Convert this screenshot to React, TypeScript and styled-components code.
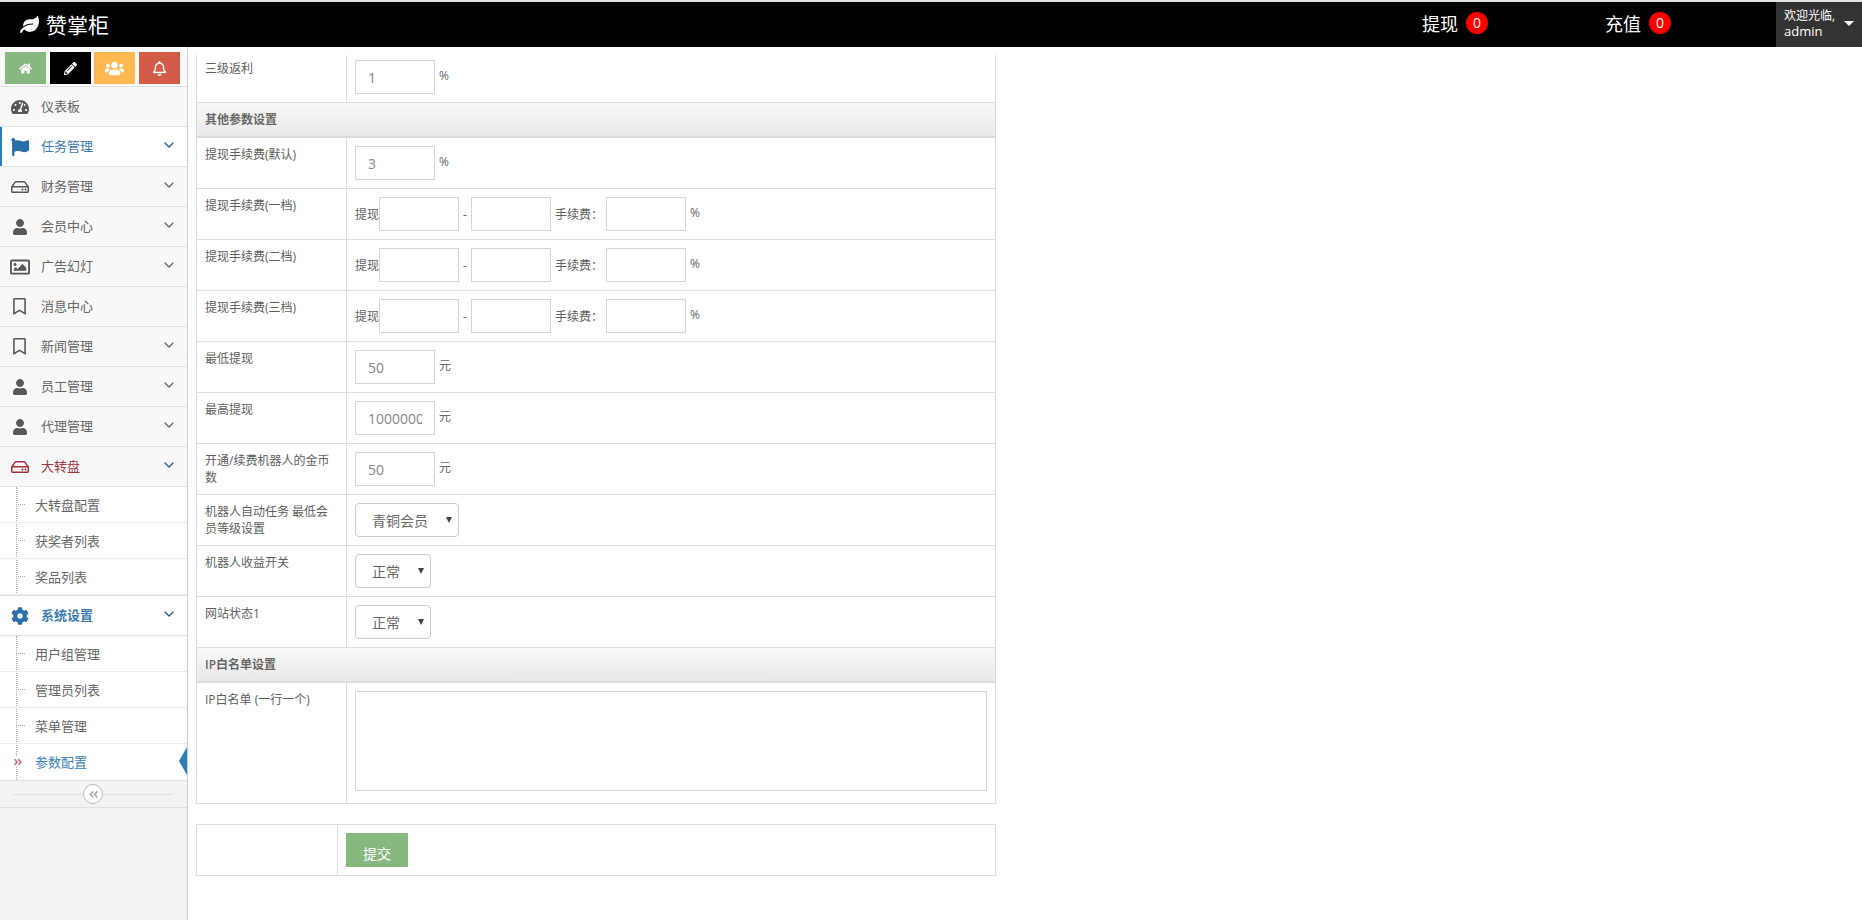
import React from "react";
import styled, { createGlobalStyle } from "styled-components";
import {
	FaAngleDoubleLeft,
	FaAngleDoubleRight,
	FaCog,
	FaFlag,
	FaHome,
	FaLeaf,
	FaPencilAlt,
	FaRegBell,
	FaRegBookmark,
	FaRegHdd,
	FaRegImage,
	FaTachometerAlt,
	FaUser,
	FaUsers,
} from "react-icons/fa";
import { FiChevronDown } from "react-icons/fi";

const GlobalStyle = createGlobalStyle`
	html, body {
		margin: 0;
		padding: 0;
		background: #fff;
	}
	body {
		font-family: "Open Sans", "Noto Sans CJK SC", sans-serif;
		font-size: 12px;
		color: #5e5e5e;
	}
	* {
		box-sizing: border-box;
	}
`;

const Page = styled.div`
	display: flex;
	flex-direction: column;
	min-height: 920px;
`;

/* top bar */
const Navbar = styled.header`
	display: flex;
	align-items: stretch;
	height: 47px;
	background: #000;
	border-top: 2px solid #e2e2e2;
	color: #fff;
`;
const Brand = styled.div`
	display: flex;
	align-items: center;
	gap: 7px;
	padding-left: 20px;
	font-size: 21px;
	line-height: 24px;
	flex: 1;
	svg {
		font-size: 19px;
	}
`;
const NavStat = styled.div<{ $width: number }>`
	display: flex;
	align-items: center;
	gap: 8px;
	width: ${(p) => p.$width}px;
	padding-bottom: 3px;
	font-size: 18px;
`;
const Badge = styled.span`
	display: flex;
	align-items: center;
	justify-content: center;
	width: 22px;
	height: 22px;
	border-radius: 50%;
	background: #f00;
	font-size: 14px;
	line-height: 22px;
`;
const UserBox = styled.div`
	display: flex;
	align-items: center;
	width: 86px;
	padding: 0 0 2px 8px;
	background: #333;
`;
const UserText = styled.div`
	font-size: 12px;
	line-height: 15px;
	span {
		display: block;
		font-size: 13px;
		line-height: 17px;
	}
`;
const Caret = styled.i`
	margin-left: 9px;
	border-left: 5px solid transparent;
	border-right: 5px solid transparent;
	border-top: 5px solid #fff;
`;

const Body = styled.div`
	display: flex;
	flex: 1;
`;

/* sidebar */
const Sidebar = styled.aside`
	width: 188px;
	background: #f2f2f2;
	border-right: 1px solid #ccc;
	flex-shrink: 0;
`;
const Shortcuts = styled.div`
	display: flex;
	gap: 3.5px;
	height: 40px;
	padding: 5px 0 0 5px;
	background: #fafafa;
	border-bottom: 1px solid #e0e0e0;
`;
const ShortcutBtn = styled.div<{ $bg: string }>`
	display: flex;
	align-items: center;
	justify-content: center;
	width: 41px;
	height: 32px;
	background: ${(p) => p.$bg};
	color: #fff;
	font-size: 13px;
`;
const MenuRow = styled.div<{ $tone?: "open" | "red" | "current" }>`
	display: flex;
	align-items: center;
	height: 40px;
	border-bottom: 1px solid #e2e2e2;
	font-size: 13px;
	background: ${(p) => (p.$tone === "open" || p.$tone === "current" ? "#fff" : "#f8f8f8")};
	color: ${(p) => (p.$tone === "red" ? "#a23339" : p.$tone ? "#3b7bb0" : "#666")};
	box-shadow: ${(p) => (p.$tone === "open" ? "inset 2px 0 0 #2b7dbc" : "none")};
`;
const MenuIcon = styled.span<{ $tone?: string }>`
	display: flex;
	align-items: center;
	justify-content: center;
	width: 41px;
	padding-right: 2px;
	font-size: 18px;
	color: ${(p) => (p.$tone === "red" ? "#a23339" : p.$tone ? "#2b6ea8" : "#585858")};
`;
const MenuText = styled.span<{ $bold?: boolean }>`
	flex: 1;
	padding-bottom: 2px;
	font-weight: ${(p) => (p.$bold ? 600 : 400)};
`;
const Chevron = styled(FiChevronDown)<{ $tone?: string }>`
	margin: 0 10px 3px 0;
	font-size: 16px;
	color: ${(p) => (p.$tone ? "#2e5b8c" : "#666")};
`;
const SubMenu = styled.div<{ $closed?: boolean }>`
	position: relative;
	background: #fff;
	border-bottom: ${(p) => (p.$closed ? "1px solid #e2e2e2" : "none")};
	&::before {
		content: "";
		position: absolute;
		left: 16px;
		top: 0;
		bottom: 0;
		border-left: 1px dotted #a8a8b4;
	}
`;
const SubItem = styled.div<{ $active?: boolean }>`
	position: relative;
	display: flex;
	align-items: center;
	height: 36px;
	padding: 0 0 1px 35px;
	border-bottom: 1px dotted #dcdcdc;
	font-size: 13px;
	color: ${(p) => (p.$active ? "#3b82b8" : "#666")};
	&:last-child {
		border-bottom: ${(p) => (p.$active ? "none" : "1px dotted #dcdcdc")};
	}
	&::before {
		content: "";
		display: ${(p) => (p.$active ? "none" : "block")};
		position: absolute;
		left: 18px;
		top: 17px;
		width: 7px;
		border-top: 1px dotted #a8a8b4;
	}
`;
const ActiveMark = styled(FaAngleDoubleRight)`
	position: absolute;
	left: 13px;
	top: 13px;
	font-size: 10px;
	color: #c9687a;
	background: #fff;
`;
const ActiveArrow = styled.i`
	position: absolute;
	right: 0;
	top: 3px;
	border-top: 14px solid transparent;
	border-bottom: 14px solid transparent;
	border-right: 8px solid #2b7dbc;
`;
const CollapseBar = styled.div`
	position: relative;
	display: flex;
	align-items: center;
	justify-content: center;
	height: 28px;
	background: #f3f3f3;
	border-top: 1px solid #e0e0e0;
	border-bottom: 1px solid #e0e0e0;
	&::before {
		content: "";
		position: absolute;
		left: 13px;
		right: 14px;
		top: 13px;
		border-top: 1px solid #e0e0e0;
	}
`;
const CollapseBtn = styled.span`
	position: relative;
	display: flex;
	align-items: center;
	justify-content: center;
	width: 20px;
	height: 20px;
	margin-left: -1px;
	border: 1px solid #bbb;
	border-radius: 50%;
	background: #fff;
	color: #aaa;
	font-size: 11px;
`;

/* form */
const Main = styled.main`
	flex: 1;
	padding: 8px 0 0 8px;
`;
const Table = styled.div`
	width: 800px;
	border-left: 1px solid #ddd;
	border-right: 1px solid #ddd;
	border-bottom: 1px solid #ddd;
`;
const Row = styled.div`
	display: flex;
	border-bottom: 1px solid #ddd;
	&:last-child {
		border-bottom: none;
	}
`;
const SectionRow = styled.div`
	display: flex;
	align-items: center;
	height: 35px;
	padding: 0 0 1px 8px;
	border-bottom: 2px solid #ddd;
	background: linear-gradient(#f8f8f8, #e9e9e9);
	font-weight: 600;
	color: #666;
`;
const Label = styled.div`
	width: 150px;
	flex-shrink: 0;
	padding: 8px 8px 0;
	border-right: 1px solid #ddd;
	line-height: 17px;
`;
const FirstLabel = styled(Label)`
	padding-top: 5px;
`;
const Cell = styled.div<{ $top?: number; $bottom?: number }>`
	display: flex;
	align-items: center;
	flex: 1;
	padding: ${(p) => p.$top ?? 8}px 8px ${(p) => p.$bottom ?? 8}px;
`;
const TextInput = styled.input`
	width: 80px;
	height: 34px;
	padding: 0 12px;
	border: 1px solid #d5d5d5;
	border-radius: 0;
	outline: none;
	font-family: inherit;
	font-size: 14px;
	color: #858585;
	background: #fff;
`;
const Suffix = styled.span`
	margin: 0 0 4px 4px;
	line-height: 17px;
	color: #666;
`;
const Word = styled.span<{ $left?: number; $right?: number }>`
	margin-left: ${(p) => p.$left ?? 0}px;
	margin-right: ${(p) => p.$right ?? 0}px;
	line-height: 17px;
`;
const SelectWrap = styled.div`
	position: relative;
	&::after {
		content: "";
		position: absolute;
		right: 7px;
		top: 14px;
		border-left: 3px solid transparent;
		border-right: 3px solid transparent;
		border-top: 6px solid #444;
		pointer-events: none;
	}
`;
const Select = styled.select<{ $width: number }>`
	display: block;
	width: ${(p) => p.$width}px;
	height: 34px;
	padding: 0 0 0 16px;
	border: 1px solid #ccc;
	border-radius: 4px;
	outline: none;
	appearance: none;
	background: #fff;
	font-family: inherit;
	font-size: 14px;
	color: #666;
`;
const TextArea = styled.textarea`
	display: block;
	width: 100%;
	height: 100px;
	border: 1px solid #d5d5d5;
	outline: none;
	resize: none;
	background: #fff;
`;
const SubmitTable = styled.div`
	display: flex;
	width: 800px;
	margin-top: 20px;
	border: 1px solid #ddd;
`;
const SubmitSpacer = styled.div`
	width: 141px;
	border-right: 1px solid #ddd;
`;
const SubmitBtn = styled.button`
	width: 62px;
	height: 34px;
	padding: 7px 0 0;
	border: none;
	background: #87b87f;
	color: #fff;
	font-family: inherit;
	font-size: 14px;
	line-height: 20px;
`;

type Tone = "open" | "red" | "current" | undefined;

const MenuItem = ({ icon, text, tone, arrow = true, bold }: { icon: React.ReactNode; text: string; tone?: Tone; arrow?: boolean; bold?: boolean }) => (
	<MenuRow $tone={tone}>
		<MenuIcon $tone={tone}>{icon}</MenuIcon>
		<MenuText $bold={bold}>{text}</MenuText>
		{arrow && <Chevron $tone={tone} />}
	</MenuRow>
);

const FeeTier = ({ label }: { label: string }) => (
	<Row>
		<Label>{label}</Label>
		<Cell>
			<Word>提现</Word>
			<TextInput />
			<Word $left={4} $right={4}>-</Word>
			<TextInput />
			<Word $left={4} $right={3}>手续费：</Word>
			<TextInput />
			<Suffix>%</Suffix>
		</Cell>
	</Row>
);

const ValueRow = ({ label, value, unit }: { label: string; value: string; unit: string }) => (
	<Row>
		<Label>{label}</Label>
		<Cell>
			<TextInput defaultValue={value} />
			<Suffix>{unit}</Suffix>
		</Cell>
	</Row>
);

const SelectRow = ({ label, value, width }: { label: string; value: string; width: number }) => (
	<Row>
		<Label>{label}</Label>
		<Cell>
			<SelectWrap>
				<Select $width={width} defaultValue={value}>
					<option>{value}</option>
				</Select>
			</SelectWrap>
		</Cell>
	</Row>
);

export default function App() {
	return (
		<Page>
			<GlobalStyle />
			<Navbar>
				<Brand><FaLeaf />赞掌柜</Brand>
				<NavStat $width={183}>提现<Badge>0</Badge></NavStat>
				<NavStat $width={171}>充值<Badge>0</Badge></NavStat>
				<UserBox>
					<UserText>欢迎光临,<span>admin</span></UserText>
					<Caret />
				</UserBox>
			</Navbar>
			<Body>
				<Sidebar>
					<Shortcuts>
						<ShortcutBtn $bg="#87b87f"><FaHome /></ShortcutBtn>
						<ShortcutBtn $bg="#000"><FaPencilAlt /></ShortcutBtn>
						<ShortcutBtn $bg="#ffb752"><FaUsers size={19} /></ShortcutBtn>
						<ShortcutBtn $bg="#d15b47"><FaRegBell size={15} /></ShortcutBtn>
					</Shortcuts>
					<MenuItem icon={<FaTachometerAlt />} text="仪表板" arrow={false} />
					<MenuItem icon={<FaFlag />} text="任务管理" tone="open" />
					<MenuItem icon={<FaRegHdd />} text="财务管理" />
					<MenuItem icon={<FaUser size={16} />} text="会员中心" />
					<MenuItem icon={<FaRegImage size={20} />} text="广告幻灯" />
					<MenuItem icon={<FaRegBookmark size={17} />} text="消息中心" arrow={false} />
					<MenuItem icon={<FaRegBookmark size={17} />} text="新闻管理" />
					<MenuItem icon={<FaUser size={16} />} text="员工管理" />
					<MenuItem icon={<FaUser size={16} />} text="代理管理" />
					<MenuItem icon={<FaRegHdd />} text="大转盘" tone="red" />
					<SubMenu $closed>
						<SubItem>大转盘配置</SubItem>
						<SubItem>获奖者列表</SubItem>
						<SubItem>奖品列表</SubItem>
					</SubMenu>
					<MenuItem icon={<FaCog />} text="系统设置" tone="current" bold />
					<SubMenu>
						<SubItem>用户组管理</SubItem>
						<SubItem>管理员列表</SubItem>
						<SubItem>菜单管理</SubItem>
						<SubItem $active>
							<ActiveMark />
							参数配置
							<ActiveArrow />
						</SubItem>
					</SubMenu>
					<CollapseBar>
						<CollapseBtn><FaAngleDoubleLeft /></CollapseBtn>
					</CollapseBar>
				</Sidebar>
				<Main>
					<Table>
						<Row>
							<FirstLabel>三级返利</FirstLabel>
							<Cell $top={5}>
								<TextInput defaultValue="1" />
								<Suffix>%</Suffix>
							</Cell>
						</Row>
						<SectionRow>其他参数设置</SectionRow>
						<ValueRow label="提现手续费(默认)" value="3" unit="%" />
						<FeeTier label="提现手续费(一档)" />
						<FeeTier label="提现手续费(二档)" />
						<FeeTier label="提现手续费(三档)" />
						<ValueRow label="最低提现" value="50" unit="元" />
						<ValueRow label="最高提现" value="10000000" unit="元" />
						<ValueRow label="开通/续费机器人的金币数" value="50" unit="元" />
						<SelectRow label="机器人自动任务 最低会员等级设置" value="青铜会员" width={104} />
						<SelectRow label="机器人收益开关" value="正常" width={76} />
						<SelectRow label="网站状态1" value="正常" width={76} />
						<SectionRow>IP白名单设置</SectionRow>
						<Row>
							<Label>IP白名单 (一行一个)</Label>
							<Cell $bottom={12}>
								<TextArea />
							</Cell>
						</Row>
					</Table>
					<SubmitTable>
						<SubmitSpacer />
						<Cell>
							<SubmitBtn>提交</SubmitBtn>
						</Cell>
					</SubmitTable>
				</Main>
			</Body>
		</Page>
	);
}
